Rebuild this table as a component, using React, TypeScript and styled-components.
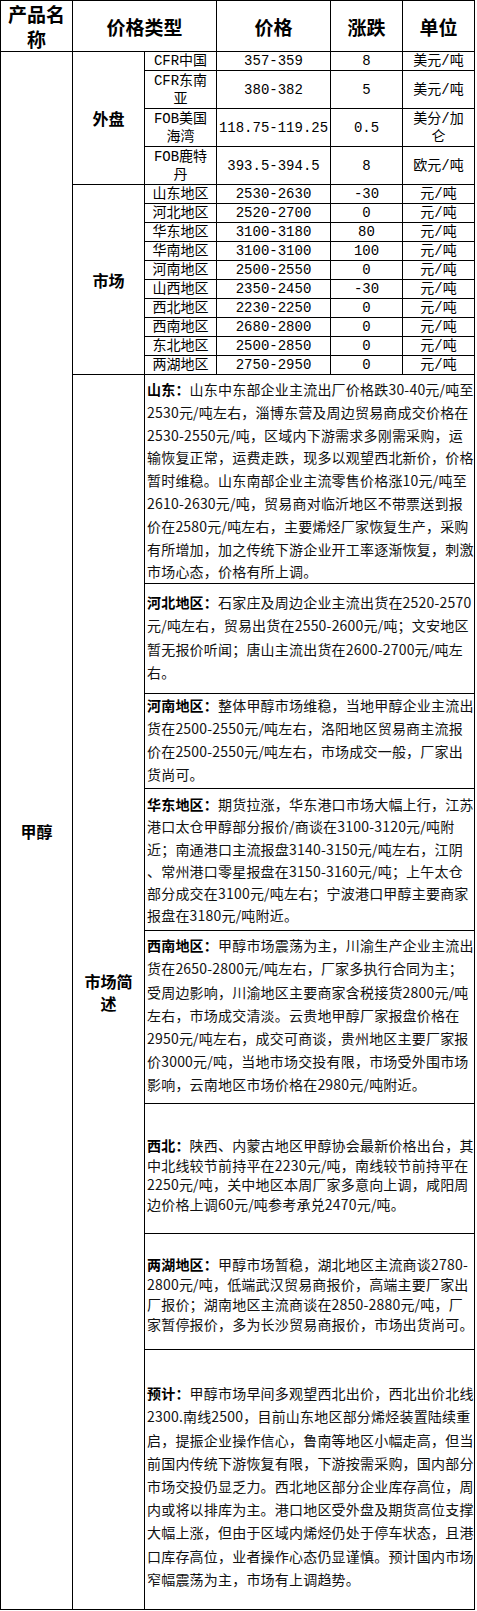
import React from 'react';
import styled, { createGlobalStyle } from 'styled-components';

const GlobalStyle = createGlobalStyle`
  html, body {
    margin: 0;
    padding: 0;
    background: #fff;
  }
  body {
    font-family: "Noto Sans CJK SC", sans-serif;
    color: #000;
  }
`;

const Table = styled.table`
  border-collapse: collapse;
  table-layout: fixed;
  width: 475px;

  th,
  td {
    border: 1px solid #000;
    padding: 0;
  }
`;

const Row = styled.tr<{ $h: number }>`
  height: ${(p) => p.$h}px;
`;

const HeadCell = styled.th`
  font-family: "Noto Sans CJK SC", sans-serif;
  font-size: 19px;
  font-weight: 700;
  line-height: 25px;
  text-align: center;
  vertical-align: middle;
`;

const GroupCell = styled.td`
  font-family: "Noto Sans CJK SC", sans-serif;
  font-size: 16px;
  font-weight: 700;
  line-height: 22px;
  text-align: center;
  vertical-align: middle;
`;

const DataCell = styled.td`
  font-family: "Liberation Mono", "Noto Sans CJK SC", monospace;
  font-size: 14px;
  line-height: 18px;
  text-align: center;
  vertical-align: middle;
  white-space: nowrap;
`;

const NoteCell = styled.td<{ $pt: number; $lh: number }>`
  font-family: "Noto Sans CJK SC", sans-serif;
  font-size: 14px;
  letter-spacing: 0.2px;
  line-height: ${(p) => p.$lh}px;
  text-align: left;
  vertical-align: top;
  color: #111;
  && {
    padding: ${(p) => p.$pt}px 0 0 2px;
  }
`;

const NoteLine = styled.div`
  white-space: nowrap;
`;

const Label = styled.b`
  font-weight: 700;
  color: #000;
`;

type Outer = { type: string[]; price: string; chg: string; unit: string[]; h: number };

const outer: Outer[] = [
  { type: ['CFR中国'], price: '357-359', chg: '8', unit: ['美元/吨'], h: 19 },
  { type: ['CFR东南', '亚'], price: '380-382', chg: '5', unit: ['美元/吨'], h: 38 },
  { type: ['FOB美国', '海湾'], price: '118.75-119.25', chg: '0.5', unit: ['美分/加', '仑'], h: 38 },
  { type: ['FOB鹿特', '丹'], price: '393.5-394.5', chg: '8', unit: ['欧元/吨'], h: 38 },
];

const market: string[][] = [
  ['山东地区', '2530-2630', '-30'],
  ['河北地区', '2520-2700', '0'],
  ['华东地区', '3100-3180', '80'],
  ['华南地区', '3100-3100', '100'],
  ['河南地区', '2500-2550', '0'],
  ['山西地区', '2350-2450', '-30'],
  ['西北地区', '2230-2250', '0'],
  ['西南地区', '2680-2800', '0'],
  ['东北地区', '2500-2850', '0'],
  ['两湖地区', '2750-2950', '0'],
];

type Note = { label: string; lines: string[]; h: number; pt: number; lh: number };

const notes: Note[] = [
  {
    label: '山东：',
    h: 209,
    pt: 3,
    lh: 22.8,
    lines: [
      '山东中东部企业主流出厂价格跌30-40元/吨至',
      '2530元/吨左右，淄博东营及周边贸易商成交价格在',
      '2530-2550元/吨，区域内下游需求多刚需采购，运',
      '输恢复正常，运费走跌，现多以观望西北新价，价格',
      '暂时维稳。山东南部企业主流零售价格涨10元/吨至',
      '2610-2630元/吨，贸易商对临沂地区不带票送到报',
      '价在2580元/吨左右，主要烯烃厂家恢复生产，采购',
      '有所增加，加之传统下游企业开工率逐渐恢复，刺激',
      '市场心态，价格有所上调。',
    ],
  },
  {
    label: '河北地区：',
    h: 110,
    pt: 7,
    lh: 23.3,
    lines: [
      '石家庄及周边企业主流出货在2520-2570',
      '元/吨左右，贸易出货在2550-2600元/吨；文安地区',
      '暂无报价听闻；唐山主流出货在2600-2700元/吨左',
      '右。',
    ],
  },
  {
    label: '河南地区：',
    h: 95,
    pt: 0,
    lh: 22.8,
    lines: [
      '整体甲醇市场维稳，当地甲醇企业主流出',
      '货在2500-2550元/吨左右，洛阳地区贸易商主流报',
      '价在2500-2550元/吨左右，市场成交一般，厂家出',
      '货尚可。',
    ],
  },
  {
    label: '华东地区：',
    h: 142,
    pt: 4,
    lh: 22.2,
    lines: [
      '期货拉涨，华东港口市场大幅上行，江苏',
      '港口太仓甲醇部分报价/商谈在3100-3120元/吨附',
      '近；南通港口主流报盘3140-3150元/吨左右，江阴',
      '、常州港口零星报盘在3150-3160元/吨；上午太仓',
      '部分成交在3100元/吨左右；宁波港口甲醇主要商家',
      '报盘在3180元/吨附近。',
    ],
  },
  {
    label: '西南地区：',
    h: 173,
    pt: 3,
    lh: 23.2,
    lines: [
      '甲醇市场震荡为主，川渝生产企业主流出',
      '货在2650-2800元/吨左右，厂家多执行合同为主；',
      '受周边影响，川渝地区主要商家含税接货2800元/吨',
      '左右，市场成交清淡。云贵地甲醇厂家报盘价格在',
      '2950元/吨左右，成交可商谈，贵州地区主要厂家报',
      '价3000元/吨，当地市场交投有限，市场受外围市场',
      '影响，云南地区市场价格在2980元/吨附近。',
    ],
  },
  {
    label: '西北：',
    h: 130,
    pt: 32,
    lh: 19.5,
    lines: [
      '陕西、内蒙古地区甲醇协会最新价格出台，其',
      '中北线较节前持平在2230元/吨，南线较节前持平在',
      '2250元/吨，关中地区本周厂家多意向上调，咸阳周',
      '边价格上调60元/吨参考承兑2470元/吨。',
    ],
  },
  {
    label: '两湖地区：',
    h: 116,
    pt: 20,
    lh: 20,
    lines: [
      '甲醇市场暂稳，湖北地区主流商谈2780-',
      '2800元/吨，低端武汉贸易商报价，高端主要厂家出',
      '厂报价；湖南地区主流商谈在2850-2880元/吨，厂',
      '家暂停报价，多为长沙贸易商报价，市场出货尚可。',
    ],
  },
  {
    label: '预计：',
    h: 260,
    pt: 32,
    lh: 23.2,
    lines: [
      '甲醇市场早间多观望西北出价，西北出价北线',
      '2300.南线2500，目前山东地区部分烯烃装置陆续重',
      '启，提振企业操作信心，鲁南等地区小幅走高，但当',
      '前国内传统下游恢复有限，下游按需采购，国内部分',
      '市场交投仍显乏力。西北地区部分企业库存高位，周',
      '内或将以排库为主。港口地区受外盘及期货高位支撑',
      '大幅上涨，但由于区域内烯烃仍处于停车状态，且港',
      '口库存高位，业者操作心态仍显谨慎。预计国内市场',
      '窄幅震荡为主，市场有上调趋势。',
    ],
  },
];

const lines = (parts: string[]) =>
  parts.map((p, i) => (
    <React.Fragment key={i}>
      {i > 0 && <br />}
      {p}
    </React.Fragment>
  ));

export default function App() {
  const total = outer.length + market.length + notes.length;
  return (
    <>
      <GlobalStyle />
      <Table>
        <colgroup>
          <col style={{ width: 72 }} />
          <col style={{ width: 72 }} />
          <col style={{ width: 72 }} />
          <col style={{ width: 114 }} />
          <col style={{ width: 72 }} />
          <col style={{ width: 72 }} />
        </colgroup>
        <tbody>
          <Row $h={50}>
            <HeadCell>
              产品名
              <br />称
            </HeadCell>
            <HeadCell colSpan={2}>价格类型</HeadCell>
            <HeadCell>价格</HeadCell>
            <HeadCell>涨跌</HeadCell>
            <HeadCell>单位</HeadCell>
          </Row>
          {outer.map((r, i) => (
            <Row $h={r.h} key={'o' + i}>
              {i === 0 && <GroupCell rowSpan={total}>甲醇</GroupCell>}
              {i === 0 && <GroupCell rowSpan={outer.length}>外盘</GroupCell>}
              <DataCell>{lines(r.type)}</DataCell>
              <DataCell>{r.price}</DataCell>
              <DataCell>{r.chg}</DataCell>
              <DataCell>{lines(r.unit)}</DataCell>
            </Row>
          ))}
          {market.map((r, i) => (
            <Row $h={19} key={'m' + i}>
              {i === 0 && <GroupCell rowSpan={market.length}>市场</GroupCell>}
              <DataCell>{r[0]}</DataCell>
              <DataCell>{r[1]}</DataCell>
              <DataCell>{r[2]}</DataCell>
              <DataCell>元/吨</DataCell>
            </Row>
          ))}
          {notes.map((n, i) => (
            <Row $h={n.h} key={'n' + i}>
              {i === 0 && (
                <GroupCell rowSpan={notes.length}>
                  市场简
                  <br />述
                </GroupCell>
              )}
              <NoteCell colSpan={4} $pt={n.pt} $lh={n.lh}>
                {n.lines.map((l, j) => (
                  <NoteLine key={j}>
                    {j === 0 && <Label>{n.label}</Label>}
                    {l}
                  </NoteLine>
                ))}
              </NoteCell>
            </Row>
          ))}
        </tbody>
      </Table>
    </>
  );
}
